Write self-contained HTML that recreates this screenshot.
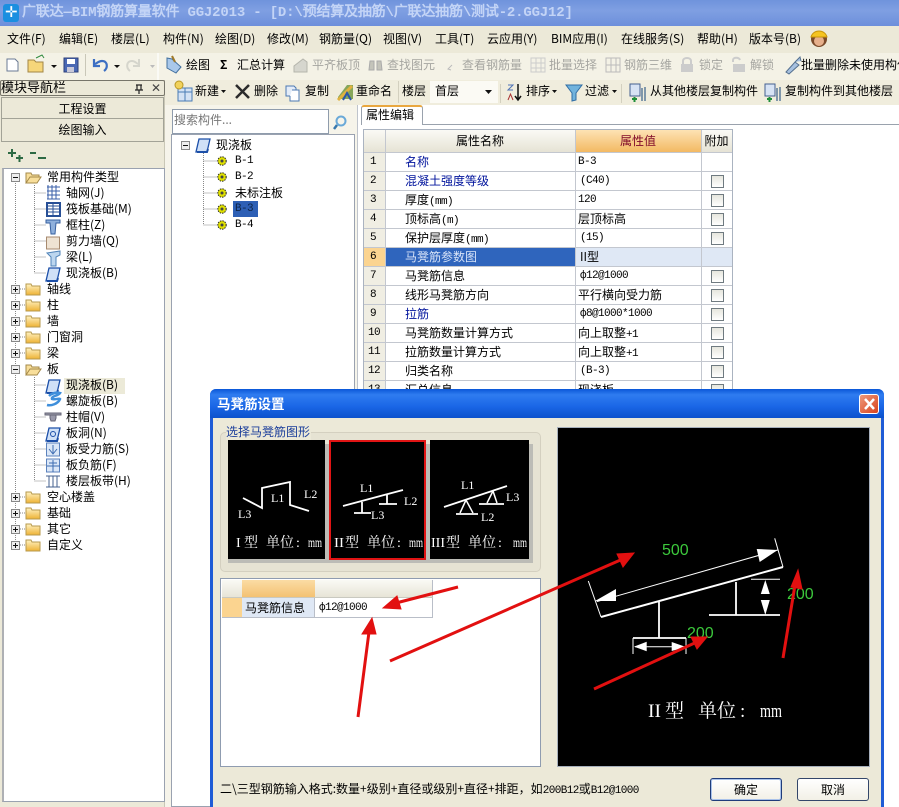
<!DOCTYPE html>
<html><head><meta charset="utf-8"><style>
html,body{margin:0;padding:0;background:#fff}
#p{position:relative;width:899px;height:807px;overflow:hidden;font:12px/16px "WenQuanYi Zen Hei","Noto Sans CJK SC","Liberation Sans",sans-serif;color:#000;background:#fff}
#p i{position:absolute;font-style:normal;white-space:nowrap}
#p b{position:absolute;display:block;font-weight:normal;box-sizing:border-box}
#p svg{position:absolute;left:0;top:0}
#p .m{font:11px/16px "Liberation Mono",monospace;letter-spacing:-.6px}
.g{color:#a5a5a0}.u{color:#00139c}
.c{text-align:center}
.ck{width:13px;height:13px;border:1px solid #6f7a80;background:linear-gradient(#e6e6de,#fff);left:711px}
.th{height:1px;background:#c3c7cf}
</style></head><body><div id="p">
<b style="left:0;top:0;width:899px;height:26px;background:linear-gradient(#6f93dc,#7f9fe2 40%,#6d8fdb)"></b>
<b style="left:3px;top:4px;width:16px;height:18px;background:#1b8fe0;border-radius:3px"></b>
<i style="left:5px;top:4px;color:#fff;font-size:15px">✛</i>
<i style="left:22px;top:5px;font:bold 14px/16px 'Liberation Mono','WenQuanYi Zen Hei',monospace;color:#c3d4f6;letter-spacing:-.18px">广联达—BIM钢筋算量软件 GGJ2013 - [D:\预结算及抽筋\广联达抽筋\测试-2.GGJ12]</i>
<b style="left:0;top:26px;width:899px;height:27px;background:#ece9d8"></b>
<b style="left:0;top:53px;width:899px;height:27px;background:#f4f2e6"></b>
<i style="left:7px;top:31px">文件(F)</i><i style="left:59px;top:31px">编辑(E)</i><i style="left:111px;top:31px">楼层(L)</i><i style="left:163px;top:31px">构件(N)</i><i style="left:215px;top:31px">绘图(D)</i><i style="left:267px;top:31px">修改(M)</i><i style="left:319px;top:31px">钢筋量(Q)</i><i style="left:383px;top:31px">视图(V)</i><i style="left:435px;top:31px">工具(T)</i><i style="left:487px;top:31px">云应用(Y)</i><i style="left:551px;top:31px">BIM应用(I)</i><i style="left:621px;top:31px">在线服务(S)</i><i style="left:697px;top:31px">帮助(H)</i><i style="left:749px;top:31px">版本号(B)</i>
<i style="left:186px;top:57px">绘图</i><i style="left:220px;top:57px;font-weight:bold">Σ</i><i style="left:237px;top:57px">汇总计算</i>
<i class="g" style="left:312px;top:57px">平齐板顶</i><i class="g" style="left:387px;top:57px">查找图元</i><i class="g" style="left:462px;top:57px">查看钢筋量</i><i class="g" style="left:549px;top:57px">批量选择</i><i class="g" style="left:624px;top:57px">钢筋三维</i><i class="g" style="left:699px;top:57px">锁定</i><i class="g" style="left:750px;top:57px">解锁</i>
<i style="left:801px;top:57px">批量删除未使用构件</i>
<b style="left:165px;top:80px;width:734px;height:25px;background:#f0eddd"></b>
<b style="left:165px;top:105px;width:192px;height:702px;background:#f6f4ea"></b>
<b style="left:171px;top:805px;width:186px;height:2px;background:#fff"></b>
<i style="left:195px;top:83px">新建</i><i style="left:254px;top:83px">删除</i><i style="left:305px;top:83px">复制</i><i style="left:356px;top:83px">重命名</i><i style="left:402px;top:83px">楼层</i>
<b style="left:430px;top:81px;width:68px;height:22px;background:#fbfaf4"></b><i style="left:435px;top:83px">首层</i>
<i style="left:526px;top:83px">排序</i><i style="left:585px;top:83px">过滤</i><i style="left:650px;top:83px">从其他楼层复制构件</i><i style="left:785px;top:83px">复制构件到其他楼层</i>
<!-- left panel -->
<b style="left:0;top:80px;width:165px;height:727px;background:#ece9d8;border-right:1px solid #c9c7b6"></b>
<b style="left:0;top:80px;width:165px;height:16px;background:#ece9d8;border:1px solid #77756a;border-radius:2px"></b>
<i style="left:1px;top:79px;font-size:13px">模块导航栏</i>
<i style="left:151px;top:80px;color:#444;font-size:12px">✕</i>
<b class="c" style="left:1px;top:97px;width:163px;height:22px;line-height:21px;background:#ece9d8;border:1px solid #a3a397;border-width:1px 1px 1px 1px">工程设置</b>
<b class="c" style="left:1px;top:119px;width:163px;height:23px;line-height:21px;background:#ece9d8;border:1px solid #a3a397;border-width:0 1px 1px 1px">绘图输入</b>
<b style="left:2px;top:168px;width:163px;height:634px;background:#fff;border:1px solid #9aa2b0;border-left:2px solid #aeb0b4"></b>
<!-- tree 1 texts -->
<i style="left:47px;top:169px">常用构件类型</i>
<i style="left:66px;top:185px">轴网(J)</i><i style="left:66px;top:201px">筏板基础(M)</i><i style="left:66px;top:217px">框柱(Z)</i><i style="left:66px;top:233px">剪力墙(Q)</i><i style="left:66px;top:249px">梁(L)</i><i style="left:66px;top:265px">现浇板(B)</i>
<i style="left:47px;top:281px">轴线</i><i style="left:47px;top:297px">柱</i><i style="left:47px;top:313px">墙</i><i style="left:47px;top:329px">门窗洞</i><i style="left:47px;top:345px">梁</i><i style="left:47px;top:361px">板</i>
<b style="left:64px;top:378px;width:61px;height:16px;background:#ecead8"></b>
<i style="left:66px;top:377px">现浇板(B)</i><i style="left:66px;top:393px">螺旋板(B)</i><i style="left:66px;top:409px">柱帽(V)</i><i style="left:66px;top:425px">板洞(N)</i><i style="left:66px;top:441px">板受力筋(S)</i><i style="left:66px;top:457px">板负筋(F)</i><i style="left:66px;top:473px">楼层板带(H)</i>
<i style="left:47px;top:489px">空心楼盖</i><i style="left:47px;top:505px">基础</i><i style="left:47px;top:521px">其它</i><i style="left:47px;top:537px">自定义</i>
<!-- search and component tree -->
<b style="left:172px;top:109px;width:157px;height:25px;background:#fff;border:1px solid #8f9cac"></b>
<i style="left:174px;top:112px;color:#777;font-size:12px">搜索构件...</i>
<b style="left:171px;top:134px;width:184px;height:673px;background:#fff;border:1px solid #9aa2b0"></b>
<i style="left:216px;top:137px">现浇板</i><i class="m" style="left:235px;top:153px">B-1</i><i class="m" style="left:235px;top:169px">B-2</i><i style="left:235px;top:185px">未标注板</i>
<b style="left:233px;top:201px;width:25px;height:16px;background:#2d5fb5"></b><i class="m" style="left:235px;top:201px;color:#0d2448">B-3</i><i class="m" style="left:235px;top:217px">B-4</i>
<!-- property pane -->
<b style="left:361px;top:105px;width:62px;height:20px;background:#fff;border:1px solid #9aa2ad;border-top:2px solid #e9a73f;border-bottom:0;border-radius:3px 3px 0 0"></b>
<i style="left:366px;top:107px">属性编辑</i>
<b style="left:422px;top:124px;width:477px;height:1px;background:#9aa2ad"></b>
<b style="left:357px;top:105px;width:1px;height:285px;background:#bfc4cc"></b>
<b style="left:363px;top:129px;width:369px;height:1px;background:#aab3c0"></b>
<b style="left:363px;top:130px;width:22px;height:22px;background:linear-gradient(#fafaf5,#e6e3d5)"></b>
<b class="c" style="left:385px;top:130px;width:190px;height:22px;line-height:21px;background:linear-gradient(#fafaf5,#e6e3d5)">属性名称</b>
<b class="c" style="left:575px;top:130px;width:126px;height:22px;line-height:21px;color:#800a2a;background:linear-gradient(#fde3b4,#f3b963)">属性值</b>
<b class="c" style="left:701px;top:130px;width:31px;height:22px;line-height:21px;background:linear-gradient(#fafaf5,#e6e3d5)">附加</b>
<b style="left:363px;top:152px;width:22px;height:238px;background:#f0eee3"></b>
<b style="left:363px;top:247px;width:22px;height:19px;background:#fbd490"></b>
<b style="left:385px;top:247px;width:190px;height:19px;background:#2f65bd"></b>
<b style="left:575px;top:247px;width:157px;height:19px;background:#dfe8f5"></b>
<b class="th" style="left:363px;top:152px;width:369px"></b><b class="th" style="left:363px;top:171px;width:369px"></b><b class="th" style="left:363px;top:190px;width:369px"></b><b class="th" style="left:363px;top:209px;width:369px"></b><b class="th" style="left:363px;top:228px;width:369px"></b><b class="th" style="left:363px;top:247px;width:369px"></b><b class="th" style="left:363px;top:266px;width:369px"></b><b class="th" style="left:363px;top:285px;width:369px"></b><b class="th" style="left:363px;top:304px;width:369px"></b><b class="th" style="left:363px;top:323px;width:369px"></b><b class="th" style="left:363px;top:342px;width:369px"></b><b class="th" style="left:363px;top:361px;width:369px"></b><b class="th" style="left:363px;top:380px;width:369px"></b>
<b style="left:363px;top:129px;width:1px;height:261px;background:#aab3c0"></b><b style="left:385px;top:130px;width:1px;height:260px;background:#c3c7cf"></b><b style="left:575px;top:130px;width:1px;height:260px;background:#c3c7cf"></b><b style="left:701px;top:130px;width:1px;height:260px;background:#c3c7cf"></b><b style="left:732px;top:129px;width:1px;height:261px;background:#aab3c0"></b>
<i class="m" style="left:370px;top:154px">1</i><i class="m" style="left:370px;top:173px">2</i><i class="m" style="left:370px;top:192px">3</i><i class="m" style="left:370px;top:211px">4</i><i class="m" style="left:370px;top:230px">5</i><i class="m" style="left:370px;top:249px">6</i><i class="m" style="left:370px;top:268px">7</i><i class="m" style="left:370px;top:287px">8</i><i class="m" style="left:370px;top:306px">9</i><i class="m" style="left:368px;top:325px">10</i><i class="m" style="left:368px;top:344px">11</i><i class="m" style="left:368px;top:363px">12</i><i class="m" style="left:368px;top:382px">13</i>
<i class="u" style="left:405px;top:154px">名称</i><i class="u" style="left:405px;top:173px">混凝土强度等级</i><i style="left:405px;top:192px">厚度<span class="m">(mm)</span></i><i style="left:405px;top:211px">顶标高<span class="m">(m)</span></i><i style="left:405px;top:230px">保护层厚度<span class="m">(mm)</span></i><i style="left:405px;top:249px;color:#d8e4f8">马凳筋参数图</i><i style="left:405px;top:268px">马凳筋信息</i><i style="left:405px;top:287px">线形马凳筋方向</i><i class="u" style="left:405px;top:306px">拉筋</i><i style="left:405px;top:325px">马凳筋数量计算方式</i><i style="left:405px;top:344px">拉筋数量计算方式</i><i style="left:405px;top:363px">归类名称</i><i style="left:405px;top:382px">汇总信息</i>
<i class="m" style="left:578px;top:154px">B-3</i><i class="m" style="left:580px;top:173px">(C40)</i><i class="m" style="left:578px;top:192px">120</i><i style="left:578px;top:211px">层顶标高</i><i class="m" style="left:580px;top:230px">(15)</i><i style="left:580px;top:249px">II型</i><i class="m" style="left:580px;top:268px">ф12@1000</i><i style="left:578px;top:287px">平行横向受力筋</i><i class="m" style="left:580px;top:306px">ф8@1000*1000</i><i style="left:578px;top:325px">向上取整<span class="m">+1</span></i><i style="left:578px;top:344px">向上取整<span class="m">+1</span></i><i class="m" style="left:580px;top:363px">(B-3)</i><i style="left:578px;top:382px">现浇板</i>
<b class="ck" style="top:175px"></b><b class="ck" style="top:194px"></b><b class="ck" style="top:213px"></b><b class="ck" style="top:232px"></b><b class="ck" style="top:270px"></b><b class="ck" style="top:289px"></b><b class="ck" style="top:308px"></b><b class="ck" style="top:327px"></b><b class="ck" style="top:346px"></b><b class="ck" style="top:365px"></b><b class="ck" style="top:384px"></b>
<!-- toolbar / tree icons -->
<svg width="899" height="807" viewBox="0 0 899 807" fill="none">
<defs>
<linearGradient id="fg" x1="0" y1="0" x2="0" y2="1"><stop offset="0" stop-color="#fff3c4"/><stop offset="1" stop-color="#eeb234"/></linearGradient>
<g id="f"><path d="M0 3h5l1 2h8v9H0z" fill="url(#fg)" stroke="#b79a4e"/></g>
<g id="fo"><path d="M0 13V3h5l1 2h7v2H4L0 13h11l4-6H4" fill="#f8de9a" stroke="#a58a4a"/></g>
<g id="pl"><rect x=".5" y=".5" width="8" height="8" fill="#eee" stroke="#888"/><path d="M2 4.5h5M4.5 2v5" stroke="#111"/></g>
<g id="mi"><rect x=".5" y=".5" width="8" height="8" fill="#eee" stroke="#888"/><path d="M2 4.5h5" stroke="#111"/></g>
<g id="sl"><path d="M3 1h11l-3 13H0z" fill="#cfe0f7" stroke="#1c4fa8" stroke-width="1.3"/><path d="M1 14h10l1-3" stroke="#1c4fa8" stroke-width="2"/></g>
<g id="ge"><circle cx="5" cy="5" r="4.2" fill="#dfe000" stroke="#222" stroke-dasharray="1.5 1"/><circle cx="5" cy="5" r="1.5" fill="#444"/></g>
<g id="bk"><path d="M1 2h8l3 3v9H1z" fill="#fff" stroke="#6a7a94"/></g>
</defs>
<g stroke="#888" stroke-dasharray="1 1"><path d="M15.500 181V551M34.500 185V273M34.500 193h11M34.500 209h11M34.500 225h11M34.500 241h11M34.500 257h11M34.500 273h11M34.500 377V481M34.500 385h11M34.500 401h11M34.500 417h11M34.500 433h11M34.500 449h11M34.500 465h11M34.500 481h11M20 289h6M20 305h6M20 321h6M20 337h6M20 353h6M20 497h6M20 513h6M20 529h6M20 545h6"/>
<path d="M203.500 153V225M203.500 161h13M203.500 177h13M203.500 193h13M203.500 209h13M203.500 225h13"/></g>
<use href="#mi" x="11" y="173"/><use href="#fo" x="26" y="170"/>
<use href="#pl" x="11" y="285"/><use href="#f" x="26" y="281"/>
<use href="#pl" x="11" y="301"/><use href="#f" x="26" y="297"/>
<use href="#pl" x="11" y="317"/><use href="#f" x="26" y="313"/>
<use href="#pl" x="11" y="333"/><use href="#f" x="26" y="329"/>
<use href="#pl" x="11" y="349"/><use href="#f" x="26" y="345"/>
<use href="#mi" x="11" y="365"/><use href="#fo" x="26" y="362"/>
<use href="#pl" x="11" y="493"/><use href="#f" x="26" y="489"/>
<use href="#pl" x="11" y="509"/><use href="#f" x="26" y="505"/>
<use href="#pl" x="11" y="525"/><use href="#f" x="26" y="521"/>
<use href="#pl" x="11" y="541"/><use href="#f" x="26" y="537"/>
<!-- common icons -->
<path d="M47 187h13M47 191h13M47 195h13M47 199h13M48 185v14M52 185v14M56 185v14" stroke="#3a5fa8"/>
<rect x="47" y="203" width="13" height="13" stroke="#274f96" stroke-width="2"/><path d="M47 209h13M53 203v13M47 206h13M47 212h13" stroke="#274f96"/>
<path d="M46 220h14v3h-4l-1 11h-4l-1-11h-4z" fill="#8fb0dc" stroke="#365f9f"/>
<rect x="46.500" y="237" width="13" height="12" fill="#efe3d3" stroke="#a78a6f"/>
<path d="M47 253l13-2v4l-4 2v9h-5v-9z" fill="#bcd6ef" stroke="#4f83b8"/>
<use href="#sl" x="46" y="267"/><use href="#sl" x="46" y="379"/>
<path d="M49 396c3-3 8-4 11-3-2 3-9 3-8 6 3 1 7-1 8 0-2 5-9 7-13 6" stroke="#3f8fdb" stroke-width="2.500"/>
<path d="M45 413h16v2H45zM50 415h6v3l-1 3h-4l-1-3z" fill="#99a" stroke="#667"/>
<use href="#sl" x="46" y="427"/><circle cx="53" cy="434" r="2.500" stroke="#1c4fa8"/>
<rect x="46.500" y="443" width="13" height="13" fill="#dbe7f7" stroke="#5b82bd"/><path d="M53 445v9M49 449l4 5 4-5" stroke="#3e6cb2"/>
<rect x="46.500" y="459" width="13" height="13" fill="#dbe7f7" stroke="#5b82bd"/><path d="M47 466h13M53 460v12M49 463h8" stroke="#3e6cb2"/>
<path d="M46 476h14M46 487h14M49 476v11M53 476v11M57 476v11" stroke="#44608f"/>
<!-- plus minus -->
<path d="M8 153h8M12 149v8M16 158h7M19.500 155v7" stroke="#2e6a44" stroke-width="2"/><path d="M30 153h6M38 158h8" stroke="#2e6a44" stroke-width="2"/>
<!-- component tree -->
<use href="#mi" x="181" y="141"/><use href="#sl" x="196" y="138"/>
<use href="#ge" x="217" y="156"/><use href="#ge" x="217" y="172"/><use href="#ge" x="217" y="188"/><use href="#ge" x="217" y="204"/><use href="#ge" x="217" y="220"/>
<circle cx="341" cy="121" r="4.500" stroke="#6aa9d8" stroke-width="2"/><path d="M337 125l-3 4" stroke="#3878ad" stroke-width="2.500"/>
<!-- toolbar 1 -->
<use href="#bk" x="6" y="57"/>
<path d="M28 72V60h6l2 2h7v10z" fill="#f6d67a" stroke="#a28645"/><path d="M36 58l6-3 2 3" stroke="#2f8a3e"/>
<path d="M51 65h6l-3 3z" fill="#111"/>
<rect x="64" y="58" width="14" height="14" fill="#4a68b4" stroke="#2c3f7a"/><rect x="67" y="59" width="8" height="5" fill="#fff"/><rect x="67" y="67" width="7" height="5" fill="#c8c8d8"/>
<path d="M85.500 54v22" stroke="#c9c7b8"/>
<path d="M104 71c4-3 4-10-2-10-3 0-5 2-7 3M94 59v7h6" stroke="#3c6fc3" stroke-width="2.200"/>
<path d="M114 65h6l-3 3z" fill="#111"/>
<path d="M130 71c-4-3-4-10 2-10 3 0 4 2 6 3M139 59v7h-6" stroke="#d5d5cc" stroke-width="2"/>
<path d="M150 65h5l-2.500 3z" fill="#bbb"/>
<path d="M158 53v27" stroke="#fafaf5" stroke-width="2"/>
<path d="M167 58l5 1 9 8-5 6-9-5z" fill="#a9c8ea" stroke="#42709f"/><path d="M172 56l3 6" stroke="#a07a2a" stroke-width="2"/>
<!-- grey toolbar icons -->
<path d="M294 72V66l9-7 4 3v10z" fill="#d6d6ce" stroke="#b5b5ac"/><path d="M370 61h4v9h-5zM377 61h4l1 9h-5z" fill="#c4c4ba" stroke="#aaa"/>
<path d="M452 65l-4 4 3 1" stroke="#bbb"/>
<path d="M531 58h14v14h-14zM531 63h14M531 68h14M536 58v14M541 58v14" stroke="#ccc"/>
<path d="M606 58h14v14h-14zM606 65h14M611 58v14M616 58v14" stroke="#bbb"/>
<rect x="681" y="64" width="12" height="8" fill="#ccc"/><path d="M683 64v-3c0-4 8-4 8 0v3" stroke="#ccc" stroke-width="2"/>
<rect x="733" y="64" width="12" height="8" fill="#ccc"/><path d="M733 62v-2c0-3 6-3 7 0" stroke="#ccc" stroke-width="2"/>
<path d="M786 72l9-10 4 3-10 9zM795 62l5-5 1 4" fill="#a7c1e0" stroke="#55708f"/>
<circle cx="819" cy="39" r="8" fill="#7a4a2a"/><circle cx="819" cy="41" r="5" fill="#e7b08c"/><path d="M811 37c2-8 14-8 16 0z" fill="#f5c420" stroke="#c8960c"/>
<!-- toolbar 2 -->
<path d="M178 88h14v13h-14z" fill="#d4e2f4" stroke="#4a7cb5"/><path d="M178 92h14M185 88v13" stroke="#4a7cb5"/><circle cx="179" cy="85" r="4" fill="#f1d25c" stroke="#b99724"/>
<path d="M221 90h5l-2.500 3z" fill="#111"/>
<path d="M236 85l13 13M249 85L236 98" stroke="#2b2b2b" stroke-width="2.500"/>
<path d="M286 86h8l2 2v8h-10z" fill="#e3ecf8" stroke="#4d79b2"/><path d="M292 90h7v11h-9v-5" fill="#fff" stroke="#4d79b2"/>
<path d="M338 97l9-12h6v14h-15z" fill="#86a65a"/><path d="M338 100l14-14" stroke="#e0b23f" stroke-width="3"/><path d="M343 100l4-7 4 7" stroke="#2c56a6" stroke-width="2"/>
<path d="M398.500 81v22M500.500 84v19M621.500 84v19" stroke="#d3d0bf"/>
<path d="M485 90h7l-3.500 4z" fill="#111"/>
<path d="M508 85h5l-5 5h5" stroke="#5074b6"/><path d="M508 100l2.500-6 2.500 6" stroke="#a33"/><path d="M518 84v15M515 96l3 4 3-4" stroke="#111" stroke-width="1.500"/>
<path d="M552 90h5l-2.500 3z" fill="#111"/>
<path d="M566 85h16l-6 8v7l-4 1v-8z" fill="#71b3dd" stroke="#2f6da4"/>
<path d="M612 90h5l-2.500 3z" fill="#111"/>
<path d="M630 84h10v12h-10z" fill="#d7e3f4" stroke="#44608f"/><path d="M642 88v13M645 87v14" stroke="#5a7b9a" stroke-width="1.500"/><path d="M632 99h5M634.500 97v5" stroke="#1f8f3a" stroke-width="2"/>
<path d="M765 84h10v12h-10z" fill="#d7e3f4" stroke="#44608f"/><path d="M777 88v13M780 87v14" stroke="#5a7b9a" stroke-width="1.500"/><path d="M767 99h5M769.500 97v5" stroke="#1f8f3a" stroke-width="2"/>
<path d="M136 85h6M137 85v5M141 85v5M135 90h8M139 90v4" stroke="#222" stroke-width="1.200"/>
</svg>
<!-- dialog -->
<b style="left:210px;top:389px;width:674px;height:418px;background:#ece9d8;border:solid #1f5cd6;border-width:0 3px;border-radius:6px 6px 0 0"></b>
<b style="left:210px;top:389px;width:674px;height:29px;background:linear-gradient(#0a57d8,#2f7cf0 20%,#1a66e6 60%,#0c52cc);border-radius:6px 6px 0 0"></b>
<i style="left:217px;top:395px;color:#fff;font-size:13.500px;font-weight:bold">马凳筋设置</i>
<b style="left:859px;top:394px;width:20px;height:20px;background:linear-gradient(135deg,#ee9a7c,#d9431d);border:1px solid #fff;border-radius:3px"></b>
<b style="left:220px;top:432px;width:321px;height:140px;border:1px solid #d4d0c0;border-radius:5px;background:#e6e3d3"></b>
<i style="left:226px;top:424px;color:#1a3d9a;background:#ece9d8;padding-right:1px">选择马凳筋图形</i>
<b style="left:228px;top:444px;width:305px;height:119px;background:#bcbcb6"></b>
<b style="left:228px;top:440px;width:97px;height:119px;background:#000"></b>
<b style="left:329px;top:440px;width:97px;height:120px;background:#000;border:2px solid #e01414"></b>
<b style="left:430px;top:440px;width:99px;height:119px;background:#000"></b>
<b style="left:220px;top:578px;width:321px;height:189px;background:#fff;border:1px solid #8f9cb0"></b>
<b style="left:222px;top:580px;width:20px;height:18px;background:linear-gradient(#fafaf5,#e6e3d5)"></b>
<b style="left:242px;top:580px;width:73px;height:18px;background:linear-gradient(#fbdca4,#f3c070)"></b>
<b style="left:315px;top:580px;width:117px;height:18px;background:linear-gradient(#fafaf5,#e6e3d5)"></b>
<b style="left:222px;top:598px;width:20px;height:19px;background:#fbd490"></b>
<b style="left:242px;top:598px;width:73px;height:19px;background:#dfe8f5;border-right:1px solid #b9bec8"></b>
<b style="left:222px;top:617px;width:211px;height:1px;background:#b9bec8"></b><b style="left:432px;top:580px;width:1px;height:38px;background:#b9bec8"></b><b style="left:222px;top:597px;width:211px;height:1px;background:#c9c9c0"></b>
<i style="left:245px;top:600px">马凳筋信息</i><i class="m" style="left:319px;top:600px">ф12@1000</i>
<b style="left:557px;top:427px;width:313px;height:340px;background:#000;border:1px solid #a7b0bc"></b>
<i style="left:220px;top:781px">二\三型钢筋输入格式:数量+级别+直径或级别+直径+排距，如<span class="m">200B12</span>或<span class="m">B12@1000</span></i>
<b class="c" style="left:710px;top:778px;width:72px;height:23px;line-height:21px;background:linear-gradient(#fff,#f2f0e6);border:1px solid #1f3c7a;border-radius:3px;box-shadow:inset 0 0 0 1px #a9c2ea">确定</b>
<b class="c" style="left:797px;top:778px;width:72px;height:23px;line-height:21px;background:linear-gradient(#fff,#f2f0e6);border:1px solid #33466a;border-radius:3px">取消</b>
<svg width="899" height="807" viewBox="0 0 899 807" fill="none">
<path d="M865 399l9 10M874 399l-9 10" stroke="#fff" stroke-width="2.500"/>
<!-- thumb 1 -->
<path d="M243 498l19 10v-20l28-6v23l19 6" stroke="#fff" stroke-width="1.800"/>
<!-- thumb 2 -->
<path d="M343 506l60-16M362 502v11M354 513h17M387 494v10M379 504h18" stroke="#fff" stroke-width="1.800"/>
<!-- thumb 3 -->
<path d="M444 507l63-21M456 514h22M479 504h25" stroke="#fff" stroke-width="1.800"/><path d="M466 500l-6 13M466 500l7 13M493 491l-6 12M493 491l4 12" stroke="#fff" stroke-width="1.500"/>
<g font-family="Liberation Serif,serif" font-size="12" fill="#fff">
<text x="271" y="502">L1</text><text x="304" y="498">L2</text><text x="238" y="518">L3</text>
<text x="360" y="492">L1</text><text x="404" y="505">L2</text><text x="371" y="519">L3</text>
<text x="461" y="489">L1</text><text x="506" y="501">L3</text><text x="481" y="521">L2</text>
</g>
<g font-family="Liberation Serif,'Noto Serif CJK SC',serif" font-size="14" fill="#fff">
<text x="236" y="547">I</text><text x="244" y="547">型</text><text x="266" y="547">单位</text><text x="296" y="547">:</text><text x="308" y="547" textLength="14" lengthAdjust="spacingAndGlyphs">mm</text>
<text x="334" y="547" textLength="10" lengthAdjust="spacingAndGlyphs">II</text><text x="345" y="547">型</text><text x="367" y="547">单位</text><text x="397" y="547">:</text><text x="409" y="547" textLength="14" lengthAdjust="spacingAndGlyphs">mm</text>
<text x="431" y="547" textLength="14" lengthAdjust="spacingAndGlyphs">III</text><text x="446" y="547">型</text><text x="468" y="547">单位</text><text x="498" y="547">:</text><text x="513" y="547" textLength="14" lengthAdjust="spacingAndGlyphs">mm</text>
</g>
<!-- big diagram -->
<path d="M601 617l182-50" stroke="#fff" stroke-width="2"/>
<path d="M588.300 581L601 617M774.700 538.300L783 567M596.700 601.700L777.700 550M633 638v16M686 638v16M635 646.700h50M751 579.300h29" stroke="#fff"/>
<path d="M659 602v36M633 638h53M736 582v33M709 615h71" stroke="#fff" stroke-width="1.800"/>
<path d="M595 601l21-12v12zM777.700 550l-21-1 3 13zM634 646.700l12.700-5v9.500zM686 647l-14.300-5v9zM765.300 580l-4.500 14h9zM765.300 615l-4.500-15h9z" fill="#fff"/>
<g font-family="Liberation Sans,sans-serif" font-size="16" fill="#3cc83c"><text x="662" y="555">500</text><text x="787" y="599">200</text><text x="687" y="638">200</text></g>
<g font-family="Liberation Serif,'Noto Serif CJK SC',serif" font-size="19" fill="#fff">
<text x="648" y="717" textLength="13" lengthAdjust="spacingAndGlyphs">II</text><text x="665" y="717">型</text><text x="698" y="717">单位</text><text x="740" y="717">:</text><text x="760" y="717" textLength="22" lengthAdjust="spacingAndGlyphs">mm</text>
</g>
<!-- red arrows -->
<path d="M390 661L625 558M594 689L699 641M783 658L795 585M458 587L396 603M358 717L369 632" stroke="#e21010" stroke-width="3"/>
<path d="M634 553L617 554 623 567zM707 637L691 637 697 649zM798 570L791 587 802 589zM383 608L397 596 401 609zM372 618L362 634 376 634z" fill="#e21010" stroke="#e21010"/>
</svg>
</div></body></html>
